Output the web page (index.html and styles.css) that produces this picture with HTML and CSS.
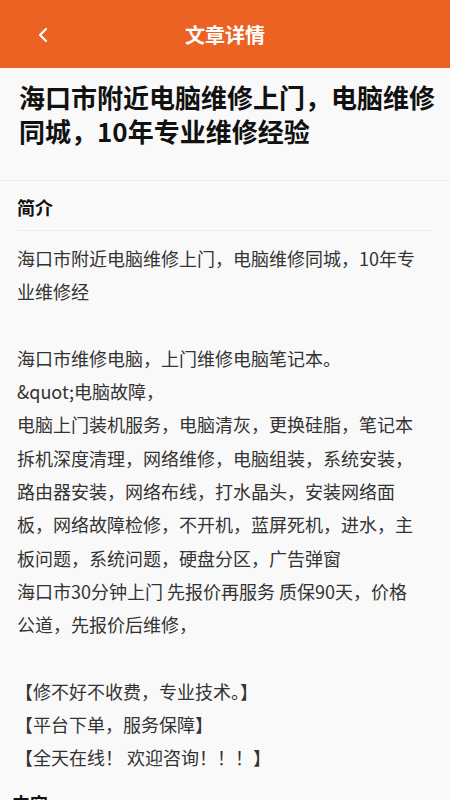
FILE: index.html
```html
<!DOCTYPE html>
<html lang="zh-CN">
<head>
<meta charset="utf-8">
<title>文章详情</title>
<link rel="stylesheet" href="styles.css">
</head>
<body>
<header class="topbar">
  <span class="back">
    <svg width="12" height="16" viewBox="0 0 12 16"><polyline points="9,2 3,8 9,14" fill="none" stroke="#fff" stroke-width="2.2" stroke-linecap="round" stroke-linejoin="round"/></svg>
  </span>
  <h1 class="topbar-title">文章详情</h1>
</header>
<main class="article">
  <h2 class="article-title">海口市附近电脑维修上门，电脑维修同城，10年专业维修经验</h2>
  <section class="section">
    <h3 class="section-title">简介</h3>
    <div class="section-body">
      <p>海口市附近电脑维修上门，电脑维修同城，10年专业维修经</p>
      <p class="blank">&nbsp;</p>
      <p>海口市维修电脑，上门维修电脑笔记本。</p>
      <p>&amp;quot;电脑故障，</p>
      <p>电脑上门装机服务，电脑清灰，更换硅脂，笔记本拆机深度清理，网络维修，电脑组装，系统安装，路由器安装，网络布线，打水晶头，安装网络面板，网络故障检修，不开机，蓝屏死机，进水，主板问题，系统问题，硬盘分区，广告弹窗</p>
      <p>海口市30分钟上门 先报价再服务 质保90天，价格公道，先报价后维修，</p>
      <p class="blank">&nbsp;</p>
      <p class="bracket">【修不好不收费，专业技术。】</p>
      <p class="bracket">【平台下单，服务保障】</p>
      <p class="bracket">【全天在线！ 欢迎咨询！！！】</p>
    </div>
  </section>
  <section class="section-plain">
    <h3 class="section-title">内容</h3>
  </section>
</main>
</body>
</html>
```
FILE: styles.css
```css
* { box-sizing: border-box; }
html, body {
  margin: 0;
  padding: 0;
  background: #f9f9f9;
  font-family: "Noto Sans CJK SC", "Noto Sans", sans-serif;
}
.topbar {
  height: 68px;
  background: #ec6222;
  display: flex;
  align-items: center;
  justify-content: center;
  position: relative;
}
.back {
  position: absolute;
  left: 37px;
  top: 27px;
  display: flex;
}
.topbar-title {
  margin: 0;
  color: #fff;
  font-size: 20px;
  font-weight: 700;
  line-height: 26px;
  margin-top: 2px;
}
.article {
  background: #f9f9f9;
}
.article-title {
  margin: 0;
  padding: 12px 14px 32px 19px;
  font-size: 26px;
  font-weight: 700;
  line-height: 34px;
  color: #111;
}
.section {
  border-top: 1px solid #ececec;
  padding: 0 18px 0 17px;
}
.section-title {
  margin: 0;
  padding: 13px 0 10px;
  font-size: 18px;
  font-weight: 700;
  line-height: 26px;
  color: #111;
  border-bottom: 1px solid #ececec;
}
.section-body {
  padding-top: 11px;
  width: 403px;
  font-size: 18px;
  line-height: 33.3px;
  color: #333;
}
.section-body p {
  margin: 0;
}
.bracket {
  text-indent: -2px;
}
.section-plain {
  padding: 2px 18px 0 12px;
}
.section-plain .section-title {
  border-bottom: none;
}
```
